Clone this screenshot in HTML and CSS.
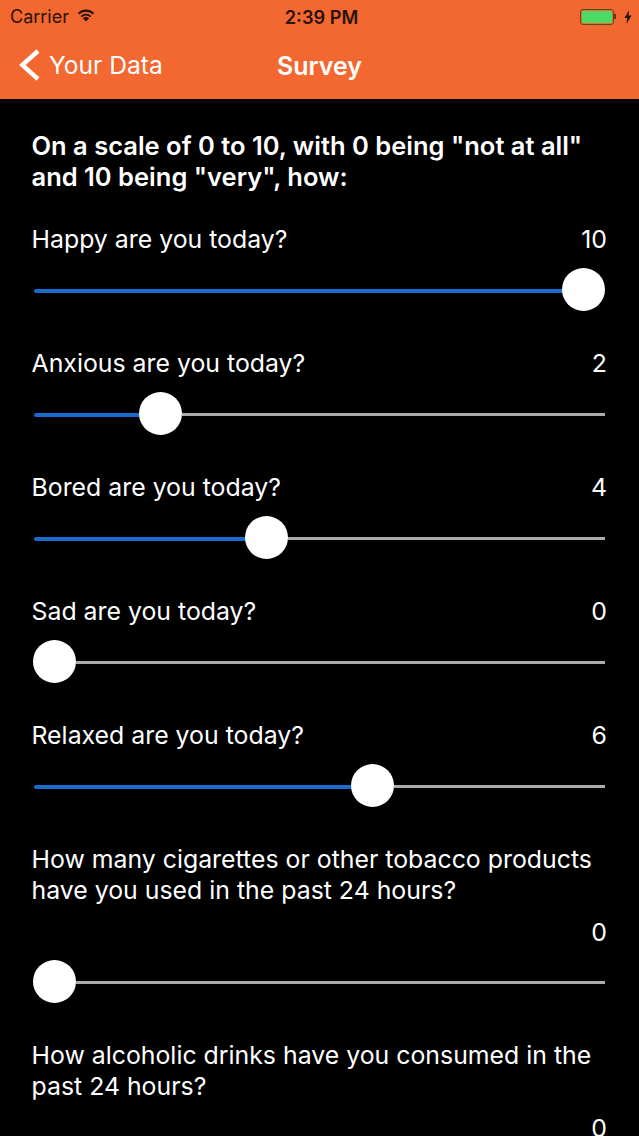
FILE: index.html
```html
<!DOCTYPE html>
<html lang="en">
<head>
<meta charset="utf-8">
<title>Survey</title>
<link rel="stylesheet" href="styles.css">
</head>
<body>
<div class="app">
  <header class="header">
    <div class="status">
      <div class="status-left">
        <span>Carrier</span>
        <svg class="wifi" viewBox="0 0 20 14" width="20" height="14"><path d="M10 13.6 6.9 10.2a4.4 4.4 0 0 1 6.2 0Z" fill="#2a1208"/><path d="M4.6 7.9a7.6 7.6 0 0 1 10.8 0l-1.3 1.4a5.8 5.8 0 0 0-8.2 0Z" fill="#2a1208"/><path d="M1.9 5a11.4 11.4 0 0 1 16.2 0l-1.3 1.5a9.5 9.5 0 0 0-13.6 0Z" fill="#2a1208"/></svg>
      </div>
      <div class="status-time">2:39 PM</div>
      <div class="status-right">
        <div class="battery"><div class="battery-fill"></div></div>
        <div class="battery-cap"></div>
        <svg class="bolt" viewBox="0 0 8 14" width="8" height="14"><path d="M5.2 0 .4 8h2.9L2.4 14l5.2-8.4H4.5Z" fill="#2a1208"/></svg>
      </div>
    </div>
    <nav class="nav">
      <div class="back">
        <svg class="chevron" viewBox="0 0 21 32" width="21" height="32"><path d="M19 2 3.2 16 19 30" fill="none" stroke="#fff" stroke-width="4.4"/></svg>
        <span>Your Data</span>
      </div>
      <div class="title">Survey</div>
    </nav>
  </header>
  <main class="content">
    <h1 class="intro">On a scale of 0 to 10, with 0 being "not at all" and 10 being "very", how:</h1>

    <section class="item">
      <div class="row"><span>Happy are you today?</span><span>10</span></div>
      <div class="slider"><div class="fill" style="width:529px"></div><div class="thumb"></div><div class="rest"></div></div>
    </section>
    <section class="item">
      <div class="row"><span>Anxious are you today?</span><span>2</span></div>
      <div class="slider"><div class="fill" style="width:106px"></div><div class="thumb"></div><div class="rest"></div></div>
    </section>
    <section class="item">
      <div class="row"><span>Bored are you today?</span><span>4</span></div>
      <div class="slider"><div class="fill" style="width:212px"></div><div class="thumb"></div><div class="rest"></div></div>
    </section>
    <section class="item">
      <div class="row"><span>Sad are you today?</span><span>0</span></div>
      <div class="slider"><div class="fill" style="width:0"></div><div class="thumb"></div><div class="rest"></div></div>
    </section>
    <section class="item">
      <div class="row"><span>Relaxed are you today?</span><span>6</span></div>
      <div class="slider"><div class="fill" style="width:318px"></div><div class="thumb"></div><div class="rest"></div></div>
    </section>
    <section class="item">
      <div class="question">How many cigarettes or other tobacco products have you used in the past 24 hours?</div>
      <div class="value">0</div>
      <div class="slider"><div class="fill" style="width:0"></div><div class="thumb"></div><div class="rest"></div></div>
    </section>
    <section class="item">
      <div class="question">How alcoholic drinks have you consumed in the past 24 hours?</div>
      <div class="value">0</div>
    </section>
  </main>
</div>
</body>
</html>
```
FILE: styles.css
```css
* { box-sizing: border-box; }
html, body { margin: 0; padding: 0; background: #000; }
body { font-family: Inter, "Liberation Sans", sans-serif; color: #fff; }
.app { width: 639px; height: 1136px; overflow: hidden; background: #000; }
.header { height: 99px; background: #f36730; }
.status { height: 33px; display: flex; align-items: center; justify-content: space-between; padding: 0 7px 0 10px; position: relative; font-size: 18px; color: #2a1208; }
.status-left { display: flex; align-items: center; gap: 8px; width: 120px; }
.wifi { margin-top: -3px; margin-left: -1px; }
.status-time { font-weight: 600; font-size: 18.2px; position: absolute; left: 4px; right: 0; text-align: center; }
.status-right { display: flex; align-items: center; }
.battery { width: 34px; height: 16px; border: 1px solid #5a4a1a; border-radius: 3px; padding: 1px; }
.battery-fill { height: 100%; background: #4cd964; border-radius: 1px; }
.battery-cap { width: 2px; height: 5px; background: #5a3a18; margin-right: 8px; }
.nav { height: 66px; position: relative; display: flex; align-items: center; justify-content: center; }
.back { position: absolute; left: 19px; top: 16px; display: flex; align-items: center; gap: 9px; font-size: 24.6px; color: #fff; }
.title { font-size: 25px; font-weight: 600; }
.content { padding: 31px 32px 0 31.5px; }
.intro { margin: 0 0 32px; font-size: 25.5px; line-height: 31px; font-weight: 600; width: 570px; }
.item { margin-bottom: 36px; }
.row { display: flex; justify-content: space-between; font-size: 24.85px; line-height: 31px; }
.question { font-size: 24.85px; line-height: 31px; }
.value { font-size: 24.85px; line-height: 31px; text-align: right; margin-top: 11px; }
.slider { height: 43px; margin: 14px 0 0 2.5px; display: flex; align-items: center; width: 571px; }
.value + .slider { margin-top: 13px; }
.fill { height: 4px; background: #1b6ad0; border-radius: 2px 0 0 2px; flex: none; }
.thumb { width: 43px; height: 43px; border-radius: 50%; background: #fff; flex: none; margin: 0 0 3px -1px; }
.rest { height: 3px; flex: 1; background: #aaa; }
```
